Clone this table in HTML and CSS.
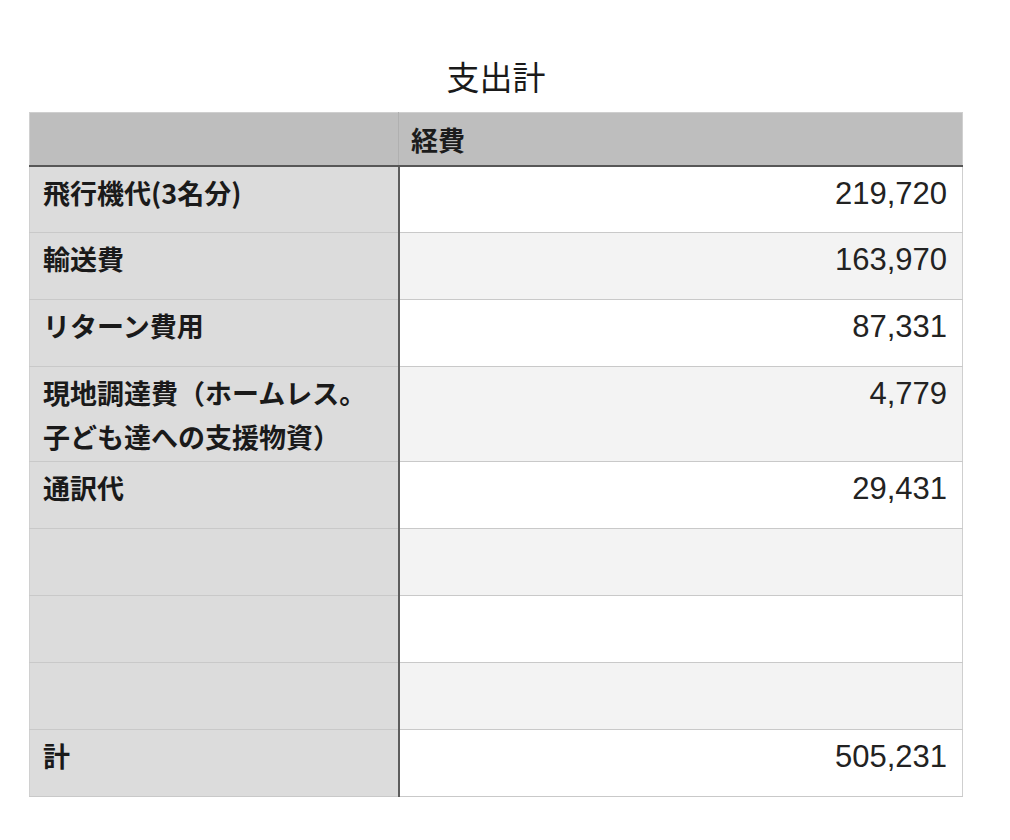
FILE: index.html
```html
<!DOCTYPE html>
<html lang="ja">
<head>
<meta charset="utf-8">
<title>支出計</title>
<link rel="stylesheet" href="styles.css">
</head>
<body>
<div class="sheet">
  <h1 class="title">支出計</h1>
  <table class="tbl">
    <thead>
      <tr><th class="corner"></th><th class="colhead">経費</th></tr>
    </thead>
    <tbody>
      <tr><th>飛行機代(3名分)</th><td>219,720</td></tr>
      <tr class="alt"><th>輸送費</th><td>163,970</td></tr>
      <tr><th>リターン費用</th><td>87,331</td></tr>
      <tr class="alt tall"><th>現地調達費（ホームレス。子ども達への支援物資）</th><td>4,779</td></tr>
      <tr><th>通訳代</th><td>29,431</td></tr>
      <tr class="alt"><th></th><td></td></tr>
      <tr><th></th><td></td></tr>
      <tr class="alt"><th></th><td></td></tr>
      <tr><th>計</th><td>505,231</td></tr>
    </tbody>
  </table>
</div>
</body>
</html>
```

FILE: styles.css
```css
html, body {
  margin: 0;
  padding: 0;
  background: #ffffff;
}

body {
  font-family: "Noto Sans CJK JP", "Noto Sans", sans-serif;
  color: #1c1c1c;
}

.sheet {
  width: 934px;
  margin-left: 29px;
  padding-top: 53px;
}

.title {
  margin: 0 0 12px 0;
  text-align: center;
  font-size: 33px;
  font-weight: 400;
  line-height: 47px;
  color: #1a1a1a;
}

.tbl {
  width: 934px;
  border-collapse: collapse;
  table-layout: fixed;
}

.tbl th, .tbl td {
  box-sizing: border-box;
  vertical-align: top;
  padding: 4px 15px 0 13px;
  line-height: 44px;
  border-top: 1px solid #c9c9c9;
  border-bottom: 1px solid #c9c9c9;
}

.tbl thead th {
  height: 53px;
  background: #bebebe;
  border-top: 1px solid #cfcfcf;
  border-bottom: 2px solid #575757;
  font-size: 27px;
  font-weight: 700;
  text-align: left;
  vertical-align: middle;
  padding: 2px 12px 0 12px;
  line-height: 34px;
}

.tbl thead .corner {
  width: 369px;
  border-left: 1px solid #d0d0d0;
  border-right: 1px solid #b0b0b0;
}

.tbl thead .colhead {
  border-right: 1px solid #d0d0d0;
}

.tbl tbody th {
  width: 369px;
  height: 67px;
  background: #dcdcdc;
  border-left: 1px solid #d0d0d0;
  border-right: 2px solid #5e5e5e;
  font-size: 27px;
  font-weight: 700;
  text-align: left;
  color: #1a1a1a;
}

.tbl tbody td {
  height: 67px;
  background: #ffffff;
  border-right: 1px solid #cfcfcf;
  text-align: right;
  font-family: "Liberation Sans", "Noto Sans CJK JP", sans-serif;
  font-size: 31px;
  padding-top: 5px;
  color: #222222;
}

.tbl tbody tr.alt td {
  background: #f3f3f3;
}

.tbl tbody tr.tall th,
.tbl tbody tr.tall td {
  height: 95px;
}
```
